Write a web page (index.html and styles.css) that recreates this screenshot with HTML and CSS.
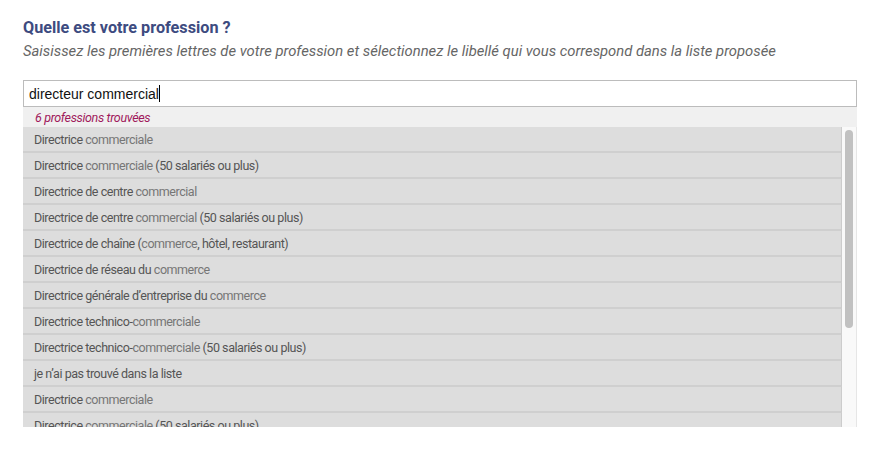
FILE: index.html
```html
<!DOCTYPE html>
<html lang="fr">
<head>
<meta charset="utf-8">
<title>Profession</title>
<link rel="stylesheet" href="styles.css">
</head>
<body>
<div class="page">
  <h2 class="title">Quelle est votre profession ?</h2>
  <p class="hint">Saisissez les premières lettres de votre profession et sélectionnez le libellé qui vous correspond dans la liste proposée</p>
  <div class="field">
    <div class="input"><span>directeur commercial</span><span class="caret"></span></div>
    <div class="count">6 professions trouvées</div>
    <div class="results">
      <ul class="list">
        <li>Directrice <span class="m">commerciale</span></li>
        <li>Directrice <span class="m">commerciale</span> (50 salariés ou plus)</li>
        <li>Directrice de centre <span class="m">commercial</span></li>
        <li>Directrice de centre <span class="m">commercial</span> (50 salariés ou plus)</li>
        <li>Directrice de chaîne (<span class="m">commerce</span>, hôtel, restaurant)</li>
        <li>Directrice de réseau du <span class="m">commerce</span></li>
        <li>Directrice générale d’entreprise du <span class="m">commerce</span></li>
        <li>Directrice technico-<span class="m">commerciale</span></li>
        <li>Directrice technico-<span class="m">commerciale</span> (50 salariés ou plus)</li>
        <li>je n’ai pas trouvé dans la liste</li>
        <li>Directrice <span class="m">commerciale</span></li>
        <li>Directrice <span class="m">commerciale</span> (50 salariés ou plus)</li>
      </ul>
      <div class="scrollbar"><div class="thumb"></div></div>
    </div>
  </div>
</div>
</body>
</html>
```
FILE: styles.css
```css
html, body {
  margin: 0;
  padding: 0;
  background: #ffffff;
}
.page {
  padding: 17px 28px 0 23px;
  font-family: Roboto, "Liberation Sans", sans-serif;
}
.title {
  margin: 0;
  font-size: 16.2px;
  line-height: 21px;
  font-weight: 700;
  color: #3d4b80;
}
.hint {
  margin: 3px 0 0 0;
  font-size: 14.8px;
  line-height: 20px;
  font-style: italic;
  color: #666666;
}
.field {
  margin-top: 19px;
  width: 834px;
}
.input {
  height: 25px;
  border: 1px solid #bcbcbc;
  display: flex;
  align-items: center;
  padding-left: 5px;
  font-family: "Liberation Sans", Arial, sans-serif;
  font-size: 14px;
  color: #111111;
}
.caret {
  display: inline-block;
  width: 1px;
  height: 17px;
  background: #000000;
}
.count {
  height: 20px;
  line-height: 21px;
  background: #f0f0f0;
  padding-left: 12px;
  font-size: 12.5px;
  letter-spacing: -0.35px;
  font-style: italic;
  color: #a0195c;
}
.results {
  display: flex;
  height: 300px;
  overflow: hidden;
}
.list {
  flex: 1;
  list-style: none;
  margin: 0;
  padding: 0;
}
.list li {
  height: 24px;
  line-height: 25px;
  padding-left: 11px;
  background: #dddddd;
  border-bottom: 2px solid #cfcfcf;
  border-right: 1px solid #cccccc;
  font-size: 12.5px;
  letter-spacing: -0.45px;
  color: #555555;
  white-space: nowrap;
}
.list .m {
  color: #767676;
}
.scrollbar {
  flex: none;
  width: 15px;
  box-sizing: border-box;
  background: #f9f9f9;
  border-right: 1px solid #e6e6e6;
  padding: 3px 2px 0 3px;
}
.thumb {
  width: 8px;
  height: 198px;
  background: #c1c1c1;
  border-radius: 4px;
}
```
